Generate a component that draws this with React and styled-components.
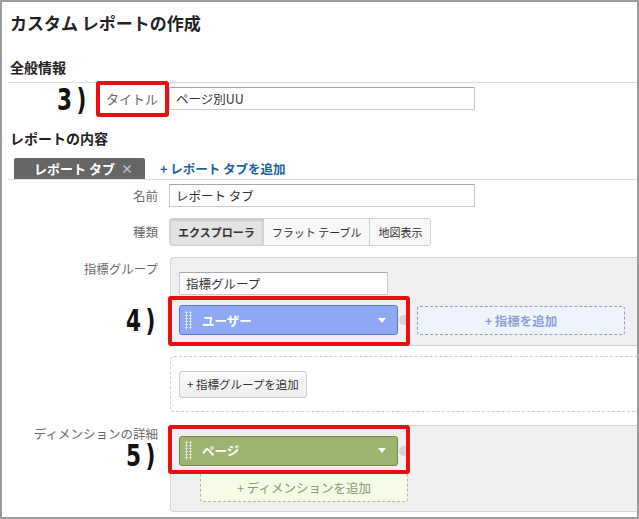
import React from "react";
import styled, { createGlobalStyle } from "styled-components";

const GlobalStyle = createGlobalStyle`
  html, body { margin: 0; padding: 0; background: #fff; }
  body { font-family: "Noto Sans CJK JP", "DejaVu Sans", sans-serif; color: #222; }
  * { box-sizing: border-box; }
`;

const Frame = styled.div`
  width: 639px;
  height: 519px;
  border: 2px solid #9b9b9b;
  background: #fff;
  overflow: hidden;
`;

const PageTitle = styled.h1`
  margin: 0;
  padding: 10px 0 0 8px;
  font-size: 17px;
  line-height: 22px;
  font-weight: bold;
  color: #222;
`;

const SectionTitle = styled.h2`
  margin: ${(p) => p.$top}px 0 0 8px;
  font-size: 14px;
  line-height: 20px;
  font-weight: bold;
  color: #222;
`;

const Divider = styled.div`
  margin: 5px 0 0 6px;
  border-top: 1px solid #dcdcdc;
`;

const Row = styled.div`
  display: grid;
  grid-template-columns: 167px 1fr;
  align-items: ${(p) => p.$align || "center"};
  margin-top: ${(p) => p.$top}px;
`;

const Label = styled.div`
  justify-self: end;
  margin-right: ${(p) => (p.$flush ? 0 : 11)}px;
  padding-top: ${(p) => p.$pad || 0}px;
  font-size: ${(p) => p.$size || 12.5}px;
  line-height: 16px;
  color: #6a6a6a;
  white-space: nowrap;
`;

// red annotation frame laid over a part of the form
const Marked = styled.div`
  position: relative;
  justify-self: ${(p) => p.$self || "auto"};
  margin-right: ${(p) => p.$mr || 0}px;
  &::after {
    content: "";
    position: absolute;
    top: ${(p) => -p.$t}px;
    right: ${(p) => -p.$r}px;
    bottom: ${(p) => -p.$b}px;
    left: ${(p) => -p.$l}px;
    border: 4px solid #ec0d12;
    border-radius: 3px;
    pointer-events: none;
    z-index: 2;
  }
`;

const Marker = styled.span`
  position: absolute;
  right: calc(100% + ${(p) => p.$gap}px);
  top: 50%;
  transform: translateY(calc(-50% + ${(p) => p.$dy || 0}px)) scaleX(0.72);
  transform-origin: right center;
  font-family: "DejaVu Sans", sans-serif;
  font-weight: bold;
  font-size: 30px;
  line-height: 22px;
  letter-spacing: 6px;
  color: #111;
  white-space: nowrap;
`;

const TextInput = styled.input`
  width: ${(p) => p.$w}px;
  height: 23px;
  margin: 0;
  border: 1px solid #c9c9c9;
  border-top-color: #a9a9a9;
  background: #fff;
  font-family: inherit;
  font-size: 12.5px;
  color: #333;
  padding: 0 6px;
  outline: none;
`;

const TabBar = styled.div`
  display: flex;
  align-items: stretch;
  margin: 10px 0 0 6px;
  padding-left: 6px;
  border-bottom: 1px solid #dcdcdc;
`;

const Tab = styled.div`
  width: 131px;
  height: 21px;
  display: flex;
  align-items: center;
  padding-left: 20px;
  background: #666;
  border-radius: 2px 2px 0 0;
  color: #fff;
  font-weight: bold;
  font-size: 13px;
`;

const TabClose = styled.span`
  margin-left: auto;
  margin-right: 12px;
  color: #c4c4c4;
  font-size: 12px;
`;

const AddLink = styled.a`
  margin-left: 15px;
  align-self: center;
  color: #1f5fa6;
  font-weight: bold;
  font-size: 12.5px;
  text-decoration: none;
`;

const Segmented = styled.div`
  display: inline-flex;
  height: 28px;
  border: 1px solid #d2d2d2;
  border-radius: 3px;
  overflow: hidden;
  justify-self: start;
`;

const Segment = styled.div`
  display: flex;
  align-items: center;
  padding: 0 8px;
  font-size: 11px;
  color: #333;
  background: ${(p) => (p.$active ? "#e3e3e3" : "#f8f8f8")};
  font-weight: ${(p) => (p.$active ? "bold" : "normal")};
  box-shadow: ${(p) => (p.$active ? "inset 0 1px 3px rgba(0,0,0,0.18)" : "none")};
  & + & {
    border-left: 1px solid #d2d2d2;
  }
`;

const Panel = styled.div`
  margin-left: 1px;
  padding: ${(p) => p.$pad};
  background: ${(p) => (p.$dashed ? "#fff" : "#efefef")};
  border: 1px ${(p) => (p.$dashed ? "dashed #cfcfcf" : "solid #d4d4d4")};
  border-right: none;
  border-radius: 4px 0 0 4px;
`;

const ChipRow = styled.div`
  display: flex;
  align-items: center;
  margin-top: ${(p) => p.$top || 0}px;
`;

const Chip = styled.div`
  display: flex;
  align-items: center;
  width: 219px;
  height: 30px;
  padding: 0 11px 0 5px;
  background: ${(p) => p.$bg};
  border: 1px solid ${(p) => p.$line};
  border-radius: 3px;
  color: #fff;
  font-weight: bold;
  font-size: 12.5px;
`;

const Grip = styled.span`
  width: 7px;
  height: 19px;
  margin-right: 10px;
  background-image: radial-gradient(circle at 1.5px 1.5px, rgba(255, 255, 255, 0.8) 0.9px, transparent 1.2px);
  background-size: 4px 3px;
`;

const ChipText = styled.span`
  flex: 1;
`;

const Caret = styled.span`
  width: 0;
  height: 0;
  border-left: 4px solid transparent;
  border-right: 4px solid transparent;
  border-top: 5px solid #fff;
`;

const Knob = styled.span`
  width: 10px;
  height: 10px;
  margin-left: 1px;
  border-radius: 50%;
  background: #d3d3d3;
`;

const AddBox = styled.div`
  width: 208px;
  height: 29px;
  margin-left: ${(p) => p.$left || 0}px;
  margin-top: ${(p) => p.$top || 0}px;
  display: flex;
  align-items: center;
  justify-content: center;
  border: 1px dashed ${(p) => p.$line};
  border-radius: 3px;
  background: ${(p) => p.$bg};
  color: ${(p) => p.$color};
  font-weight: ${(p) => (p.$bold ? "bold" : "normal")};
  font-size: 12.5px;
`;

const Button = styled.div`
  display: inline-flex;
  align-items: center;
  height: 27px;
  padding: 0 7px;
  border: 1px solid #c8c8c8;
  border-radius: 3px;
  background: linear-gradient(#fbfbfb, #eeeeee);
  font-size: 11.5px;
  color: #333;
`;

export default function App() {
  return (
    <>
      <GlobalStyle />
      <Frame>
        <PageTitle>カスタム レポートの作成</PageTitle>

        <SectionTitle $top={23}>全般情報</SectionTitle>
        <Divider />
        <Row $top={4}>
          <Marked $self="end" $mr={11} $t={10} $r={11} $b={10} $l={10}>
            <Marker $gap={15} $dy={1}>3)</Marker>
            <Label $size={13} $flush>タイトル</Label>
          </Marked>
          <TextInput $w={306} defaultValue="ページ別UU" readOnly />
        </Row>

        <SectionTitle $top={18}>レポートの内容</SectionTitle>
        <TabBar>
          <Tab>
            レポート タブ<TabClose>×</TabClose>
          </Tab>
          <AddLink href="#">+ レポート タブを追加</AddLink>
        </TabBar>

        <Row $top={4}>
          <Label>名前</Label>
          <TextInput $w={306} defaultValue="レポート タブ" readOnly />
        </Row>

        <Row $top={11}>
          <Label>種類</Label>
          <Segmented>
            <Segment $active>エクスプローラ</Segment>
            <Segment>フラット テーブル</Segment>
            <Segment>地図表示</Segment>
          </Segmented>
        </Row>

        <Row $top={11} $align="start">
          <Label $pad={4}>指標グループ</Label>
          <Panel $pad="12px 0 10px 8px">
            <TextInput $w={209} defaultValue="指標グループ" readOnly />
            <ChipRow $top={10}>
              <Marked $t={9} $r={12} $b={11} $l={11}>
                <Marker $gap={19} $dy={1}>4)</Marker>
                <Chip $bg="#8fa8f3" $line="#5f78cc">
                  <Grip />
                  <ChipText>ユーザー</ChipText>
                  <Caret />
                </Chip>
              </Marked>
              <Knob />
              <AddBox $left={8} $line="#8d9fcf" $bg="#eef3fd" $color="#8ea2d8" $bold>
                + 指標を追加
              </AddBox>
            </ChipRow>
          </Panel>
        </Row>

        <Row $top={10}>
          <span />
          <Panel $dashed $pad="13px 0 13px 8px">
            <Button>+ 指標グループを追加</Button>
          </Panel>
        </Row>

        <Row $top={13} $align="start">
          <Label $pad={1}>ディメンションの詳細</Label>
          <Panel $pad="10px 0 9px 8px">
            <ChipRow>
              <Marked $t={11} $r={12} $b={8} $l={11}>
                <Marker $gap={19} $dy={5}>5)</Marker>
                <Chip $bg="#9bb472" $line="#6c8a4a">
                  <Grip />
                  <ChipText>ページ</ChipText>
                  <Caret />
                </Chip>
              </Marked>
              <Knob />
            </ChipRow>
            <AddBox $left={21} $top={7} $line="#b3ba98" $bg="#f5fbe6" $color="#8a9a72">
              + ディメンションを追加
            </AddBox>
          </Panel>
        </Row>
      </Frame>
    </>
  );
}
